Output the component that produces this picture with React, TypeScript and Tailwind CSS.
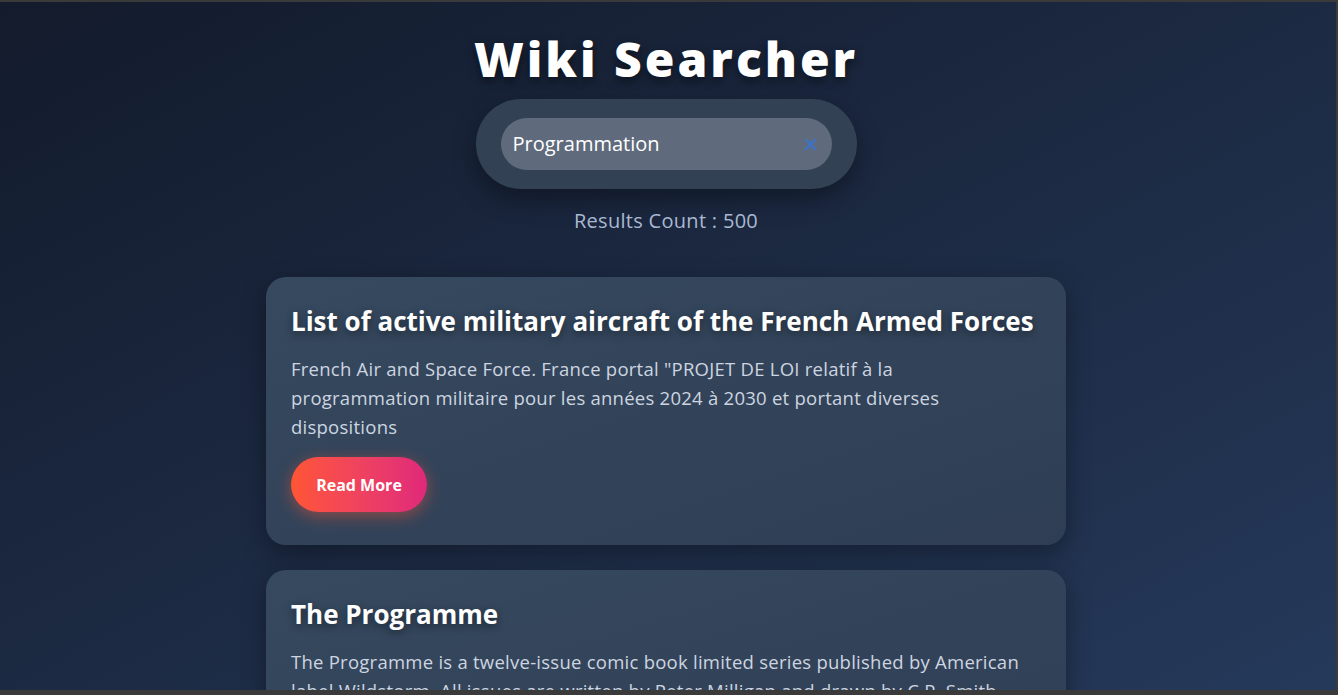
import React, { useState } from 'react';

type Article = {
  title: string;
  snippet: string;
};

const articles: Article[] = [
  {
    title: 'List of active military aircraft of the French Armed Forces',
    snippet:
      'French Air and Space Force. France portal "PROJET DE LOI relatif à la programmation militaire pour les années 2024 à 2030 et portant diverses dispositions',
  },
  {
    title: 'The Programme',
    snippet:
      'The Programme is a twelve-issue comic book limited series published by American label Wildstorm. All issues are written by Peter Milligan and drawn by C.P. Smith.',
  },
];

const font = "font-['Open_Sans','Liberation_Sans',sans-serif]";

const ArticleCard: React.FC<{ article: Article }> = ({ article }) => (
  <div className="rounded-[20px] bg-gradient-to-br from-[#36495f] to-[#2f3e54] pl-[25px] pr-[25px] pt-[25px] pb-[33px] shadow-[0_8px_24px_rgba(0,0,0,0.35)]">
    <h2 className="text-[26px] leading-[39px] font-bold text-white [text-shadow:0_3px_8px_rgba(0,0,0,0.45)]">
      {article.title}
    </h2>
    <p className="mt-[13px] pr-[12px] text-[18.5px] leading-[29px] tracking-[0.25px] text-[#cdd5e0]">{article.snippet}</p>
    <button className="mt-4 h-[55px] w-[136px] rounded-full bg-gradient-to-r from-[#ff5533] to-[#e0287a] text-[16px] font-bold text-white shadow-[0_4px_16px_rgba(255,87,51,0.45)]">
      Read More
    </button>
  </div>
);

export default function App() {
  const [query, setQuery] = useState('Programmation');

  return (
    <div
      className={`${font} h-[695px] overflow-hidden border-t-2 border-r-2 border-b-[5px] border-[#3a3a3a] bg-gradient-to-br from-[#131b2c] to-[#25395a]`}
    >
      <div className="flex w-[1332px] justify-center">
        <div className="flex w-[800px] flex-col items-center pt-[28px]">
          <h1 className="text-[48px] leading-[58px] font-extrabold tracking-[3px] text-white [text-shadow:0_4px_10px_rgba(0,0,0,0.5)]">
            Wiki Searcher
          </h1>

          {/* Search box */}
          <div className="mt-[11px] flex h-[90px] w-[381px] items-center rounded-full bg-[#334155] px-[25px] shadow-[0_10px_25px_rgba(0,0,0,0.35)]">
            <div className="flex h-[52px] w-full items-center rounded-full bg-[#5f6b7c] pl-[12px] pr-[16px]">
              <input
                value={query}
                onChange={(e) => setQuery(e.target.value)}
                className="min-w-0 flex-1 bg-transparent text-[20px] text-white outline-none"
              />
              <svg width="11" height="11" viewBox="0 0 10 10" className="ml-2">
                <path d="M1 1L9 9M9 1L1 9" stroke="#3f72c6" strokeWidth="2.4" strokeLinecap="round" />
              </svg>
            </div>
          </div>

          <p className="mt-[20px] text-[20px] leading-[24px] tracking-[0.3px] text-[#a9b9d2]">Results Count : 500</p>

          {/* Results */}
          <div className="mt-[44px] flex w-full flex-col gap-[25px]">
            {articles.map((a, i) => (
              <ArticleCard key={i} article={a} />
            ))}
          </div>
        </div>
      </div>
    </div>
  );
}
